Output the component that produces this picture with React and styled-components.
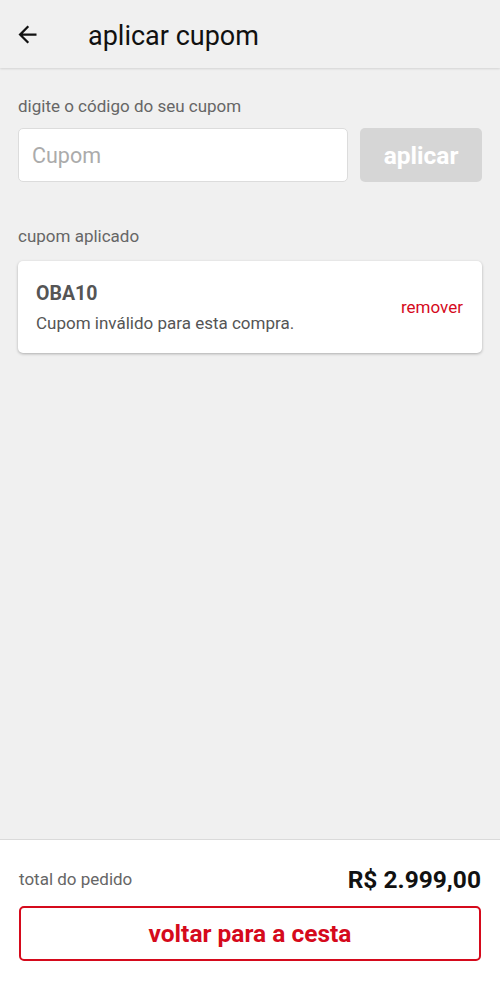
import React from "react";
import styled, { createGlobalStyle } from "styled-components";

const GlobalStyle = createGlobalStyle`
  html, body {
    margin: 0;
    padding: 0;
    background: #f0f0f0;
    font-family: Roboto, "Liberation Sans", Arial, sans-serif;
  }
  * {
    box-sizing: border-box;
  }
`;

const Screen = styled.div`
  width: 500px;
  height: 986px;
  display: flex;
  flex-direction: column;
  background: #f0f0f0;
  overflow: hidden;
`;

const TopBar = styled.header`
  height: 68px;
  display: flex;
  align-items: center;
  padding-left: 13px;
  background: #f0f0f0;
  box-shadow: 0 1px 2px rgba(0, 0, 0, 0.12);
  position: relative;
  z-index: 1;
`;

const BackButton = styled.button`
  width: 28px;
  height: 28px;
  padding: 0;
  border: none;
  background: none;
  display: flex;
  align-items: center;
  justify-content: center;
`;

const Title = styled.h1`
  margin: 3px 0 0 47px;
  font-size: 27px;
  font-weight: 400;
  color: #111;
`;

const Content = styled.main`
  flex: 1;
  padding: 22px 18px 0;
  display: flex;
  flex-direction: column;
`;

const Label = styled.p`
  margin: 0;
  font-size: 17px;
  color: #666;
  line-height: 32px;
`;

const CouponRow = styled.div`
  display: flex;
  gap: 12px;
  margin-top: 6px;
`;

const CouponInput = styled.input`
  flex: 1;
  min-width: 0;
  height: 54px;
  border: 1px solid #dcdcdc;
  border-radius: 5px;
  background: #fff;
  padding: 0 13px;
  font-family: inherit;
  font-size: 21.5px;
  color: #333;
  outline: none;

  &::placeholder {
    color: #ababab;
  }
`;

const ApplyButton = styled.button`
  width: 122px;
  height: 54px;
  border: none;
  border-radius: 5px;
  background: #d6d6d6;
  color: #fff;
  font-family: inherit;
  font-size: 24.5px;
  font-weight: 700;
`;

const Section = styled.div`
  margin-top: 38px;
`;

const Card = styled.div`
  margin-top: 9px;
  height: 92px;
  background: #fff;
  border-radius: 5px;
  box-shadow: 0 1px 3px rgba(0, 0, 0, 0.28);
  display: flex;
  align-items: center;
  justify-content: space-between;
  padding: 0 19px 0 18px;
`;

const CardText = styled.div`
  display: flex;
  flex-direction: column;
  gap: 8px;
`;

const Code = styled.span`
  font-size: 19.5px;
  font-weight: 700;
  color: #555;
`;

const Message = styled.span`
  font-size: 17px;
  color: #555;
`;

const TextLink = styled.button`
  border: none;
  background: none;
  padding: 0;
  font-family: inherit;
  font-size: 17px;
  color: #d50a1c;
`;

const Footer = styled.footer`
  height: 147px;
  background: #fff;
  border-top: 1px solid #dadada;
  padding: 24px 19px 0;
  display: flex;
  flex-direction: column;
`;

const TotalRow = styled.div`
  display: flex;
  justify-content: space-between;
  align-items: center;
  height: 30px;
`;

const TotalLabel = styled.span`
  font-size: 17px;
  color: #666;
`;

const TotalValue = styled.span`
  font-size: 24.5px;
  font-weight: 700;
  color: #111;
`;

const OutlineButton = styled.button`
  margin-top: 12px;
  height: 55px;
  border: 2px solid #d50a1c;
  border-radius: 5px;
  background: #fff;
  color: #d50a1c;
  font-family: inherit;
  font-size: 24.5px;
  font-weight: 700;
`;

const ArrowBack = () => (
  <svg width="27" height="27" viewBox="0 0 24 24" fill="#111">
    <path d="M20 11H7.83l5.59-5.59L12 4l-8 8 8 8 1.41-1.41L7.83 13H20v-2z" />
  </svg>
);

const App = () => {
  const [code, setCode] = React.useState("");

  return (
    <Screen>
      <GlobalStyle />
      <TopBar>
        <BackButton aria-label="voltar">
          <ArrowBack />
        </BackButton>
        <Title>aplicar cupom</Title>
      </TopBar>
      <Content>
        <Label>digite o código do seu cupom</Label>
        <CouponRow>
          <CouponInput
            placeholder="Cupom"
            value={code}
            onChange={(e) => setCode(e.target.value)}
          />
          <ApplyButton disabled={!code}>aplicar</ApplyButton>
        </CouponRow>
        <Section>
          <Label>cupom aplicado</Label>
          <Card>
            <CardText>
              <Code>OBA10</Code>
              <Message>Cupom inválido para esta compra.</Message>
            </CardText>
            <TextLink>remover</TextLink>
          </Card>
        </Section>
      </Content>
      <Footer>
        <TotalRow>
          <TotalLabel>total do pedido</TotalLabel>
          <TotalValue>R$ 2.999,00</TotalValue>
        </TotalRow>
        <OutlineButton>voltar para a cesta</OutlineButton>
      </Footer>
    </Screen>
  );
};

export default App;
